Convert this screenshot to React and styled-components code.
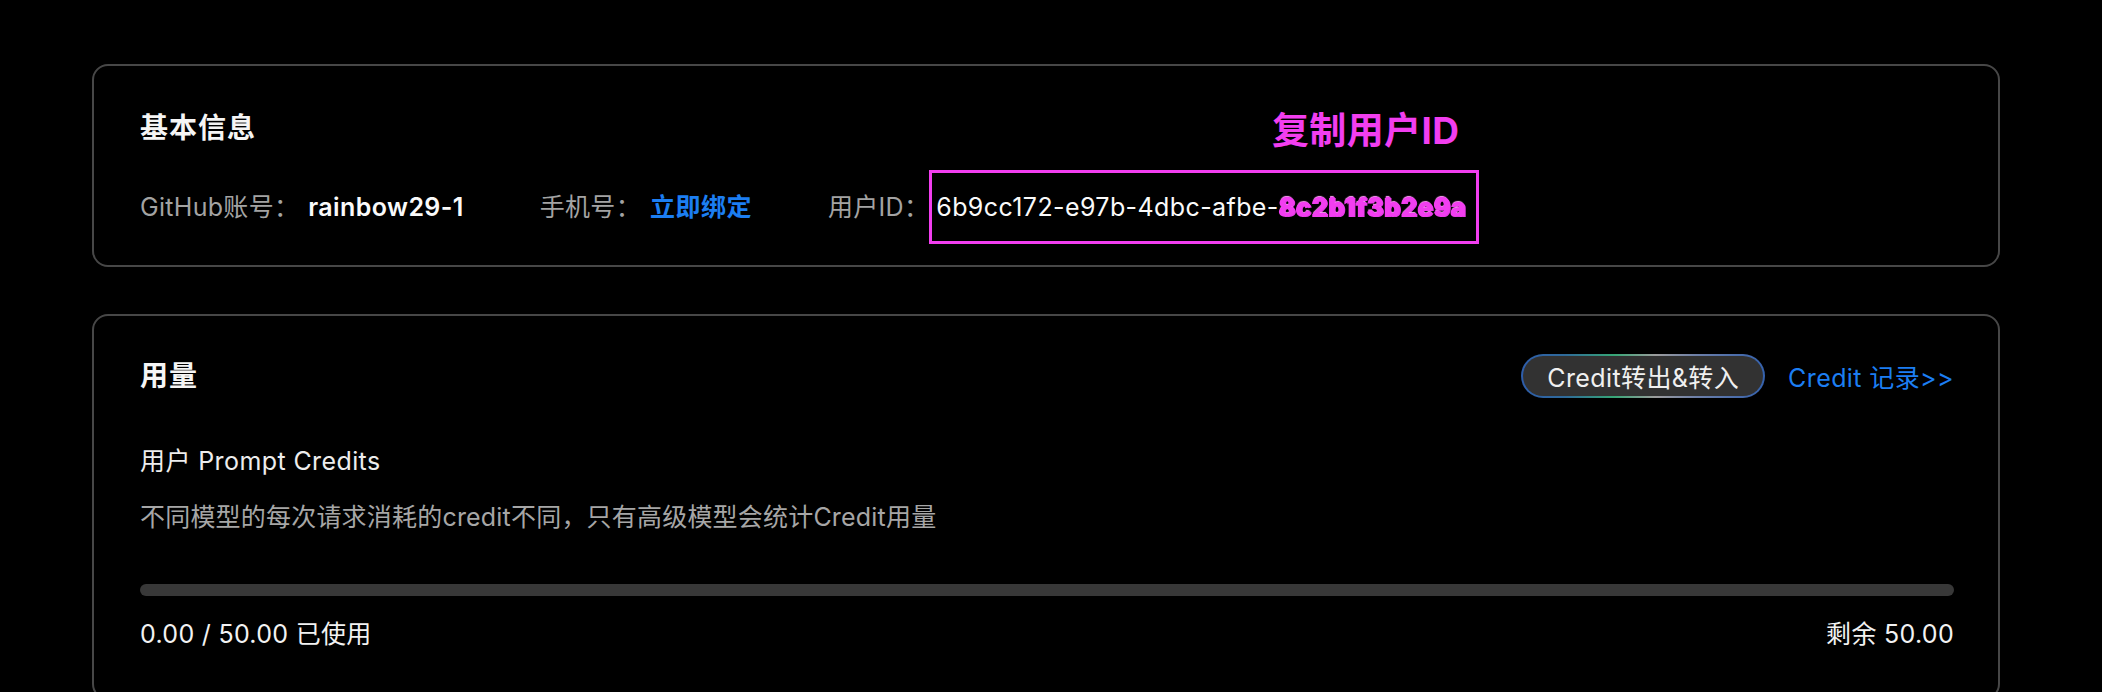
import styled, { createGlobalStyle } from "styled-components";

const GlobalStyle = createGlobalStyle`
    html, body {
        margin: 0;
        padding: 0;
        background: #000;
    }
    body {
        font-family: "Inter", "Noto Sans CJK SC", sans-serif;
        color: #f2f2f2;
    }
`

const Page = styled.div`
    min-height: 692px;
    box-sizing: border-box;
    padding: 64px 102px 0 92px;
    display: flex;
    flex-direction: column;
    gap: 47px;
    background: #000;
    overflow: hidden;
`

const Card = styled.section`
    border: 2px solid #474747;
    border-radius: 16px;
    box-sizing: border-box;
    padding: ${(p) => p.$pad};
    display: flex;
    flex-direction: column;
`

const Title = styled.h2`
    margin: 0;
    font-size: 28px;
    line-height: 36px;
    font-weight: 600;
    color: #f5f5f5;
    letter-spacing: 1px;
`

const InfoRow = styled.div`
    display: flex;
    align-items: center;
    margin-top: 24px;
    font-size: 25px;
    line-height: 36px;
`

const Field = styled.div`
    display: flex;
    align-items: center;
    margin-right: 76px;
`

const Label = styled.span`
    color: #a3a3a3;
    letter-spacing: 0.3px;
    margin-right: ${(p) => (p.$tight ? "0" : "9px")};
`

const Value = styled.span`
    color: #fafafa;
    font-weight: 600;
    letter-spacing: 0.4px;
`

const Link = styled.a`
    color: #1c7ef2;
    text-decoration: none;
    font-weight: ${(p) => (p.$bold ? 600 : 400)};
    font-size: 25px;
    letter-spacing: ${(p) => (p.$bold ? "0.5px" : "0.4px")};
    cursor: pointer;
`

const IdBox = styled.div`
    position: relative;
    border: 3px solid #f23ef0;
    height: 74px;
    box-sizing: border-box;
    display: flex;
    align-items: center;
    padding: 0 10px 0 4px;
    color: #fafafa;
    letter-spacing: 0.4px;
`

const Hidden = styled.span`
    color: #f23ef0;
    text-shadow: 1px 0 0 #f23ef0, -1px 1px 0 #f23ef0, 0 -1px 1px #ff9cf8, 2px 1px 0 #e83ae6;
    letter-spacing: 1px;
    font-weight: 700;
    filter: blur(0.4px);
`

const Note = styled.span`
    position: absolute;
    right: 17px;
    bottom: calc(100% + 22px);
    color: #f23ef0;
    font-size: 37px;
    line-height: 40px;
    font-weight: 700;
    white-space: nowrap;
`

const Header = styled.div`
    display: flex;
    align-items: center;
    justify-content: space-between;
    height: 44px;
`

const Actions = styled.div`
    display: flex;
    align-items: center;
    gap: 23px;
`

const TransferBtn = styled.button`
    height: 44px;
    padding: 0 24px;
    border-radius: 22px;
    border: 2px solid transparent;
    background:
        linear-gradient(#323232, #323232) padding-box,
        linear-gradient(90deg, #2e5daa 0%, #2f6a9a 18%, #36a676 38%, #9c9c9c 55%, #6d7fa8 72%, #3461ad 100%) border-box;
    color: #f0f0f0;
    font-family: inherit;
    font-size: 25px;
    letter-spacing: 0.4px;
    cursor: pointer;
`

const SubTitle = styled.div`
    margin-top: 45px;
    font-size: 25px;
    line-height: 36px;
    color: #ededed;
    letter-spacing: 0.4px;
`

const Desc = styled.div`
    margin-top: 20px;
    font-size: 25px;
    line-height: 36px;
    color: #a6a6a6;
    letter-spacing: 0.2px;
`

const Track = styled.div`
    margin-top: 49px;
    height: 12px;
    border-radius: 6px;
    background: #383838;
    overflow: hidden;
`

const Fill = styled.div`
    height: 100%;
    background: #1c7ef2;
`

const Stats = styled.div`
    margin-top: 20px;
    display: flex;
    justify-content: space-between;
    font-size: 25px;
    line-height: 36px;
    color: #f2f2f2;
    letter-spacing: 0.3px;
`

export default function App() {
    const used = 0;
    const total = 50;

    return (
        <>
            <GlobalStyle />
            <Page>
                <Card $pad="44px 46px 21px 46px">
                    <Title>基本信息</Title>
                    <InfoRow>
                        <Field>
                            <Label>GitHub账号：</Label>
                            <Value>rainbow29-1</Value>
                        </Field>
                        <Field>
                            <Label>手机号：</Label>
                            <Link $bold>立即绑定</Link>
                        </Field>
                        <Field>
                            <Label $tight>用户ID：</Label>
                            <IdBox>
                                <Note>复制用户ID</Note>
                                6b9cc172-e97b-4dbc-afbe-<Hidden>8c2b1f3b2e9a</Hidden>
                            </IdBox>
                        </Field>
                    </InfoRow>
                </Card>

                <Card $pad="38px 44px 46px 46px">
                    <Header>
                        <Title>用量</Title>
                        <Actions>
                            <TransferBtn>Credit转出&amp;转入</TransferBtn>
                            <Link>Credit 记录&gt;&gt;</Link>
                        </Actions>
                    </Header>
                    <SubTitle>用户 Prompt Credits</SubTitle>
                    <Desc>不同模型的每次请求消耗的credit不同，只有高级模型会统计Credit用量</Desc>
                    <Track>
                        <Fill style={{ width: `${(used / total) * 100}%` }} />
                    </Track>
                    <Stats>
                        <span>{used.toFixed(2)} / {total.toFixed(2)} 已使用</span>
                        <span>剩余 {(total - used).toFixed(2)}</span>
                    </Stats>
                </Card>
            </Page>
        </>
    );
}
